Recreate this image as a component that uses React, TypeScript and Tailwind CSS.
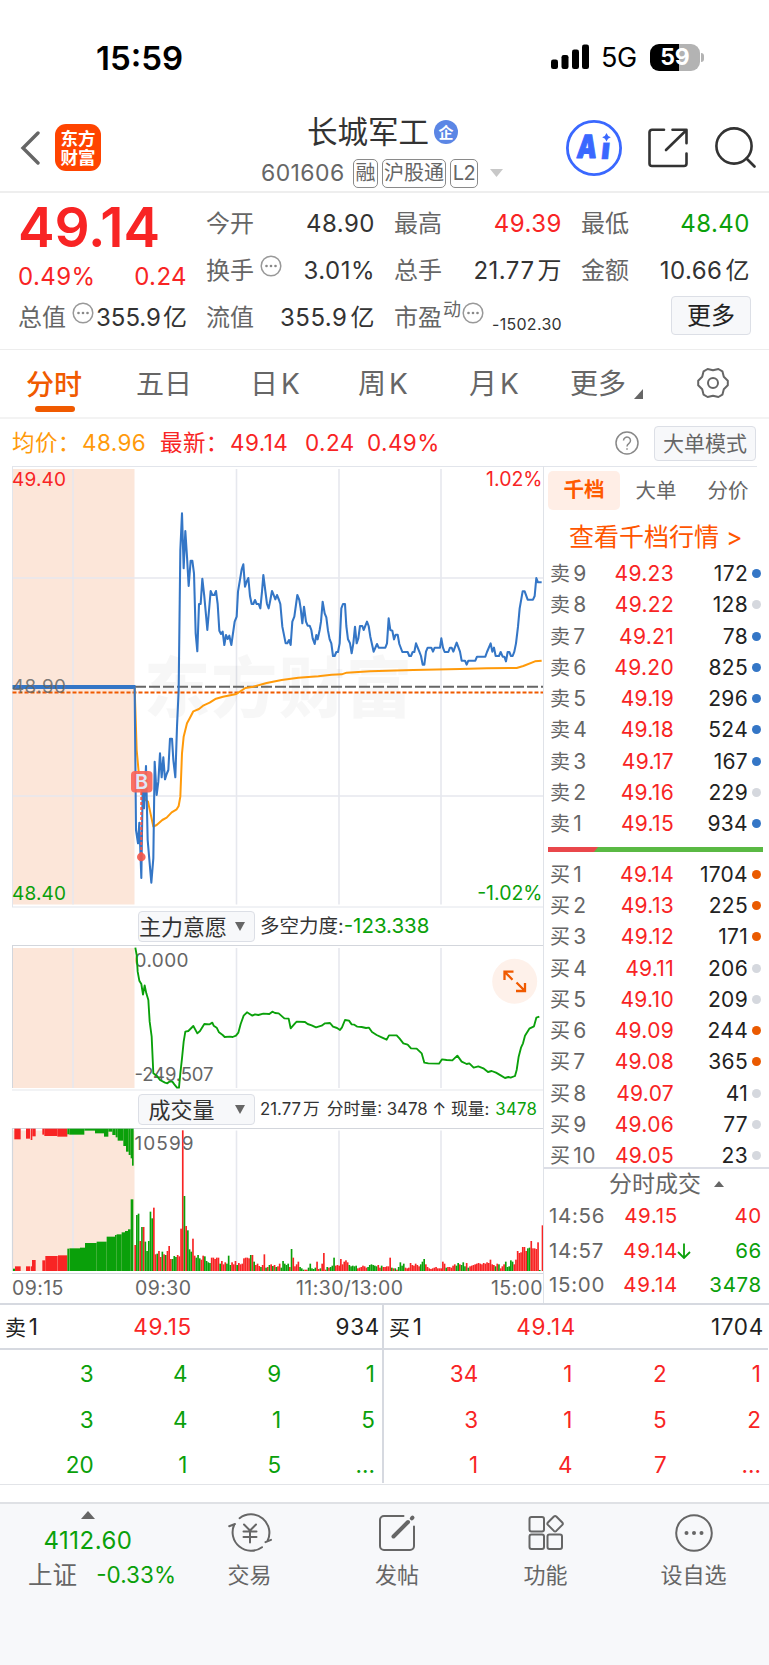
import clsx from 'clsx'
import type { ReactNode } from 'react'

const RED = '#f82424'
const GREEN = '#0aa00a'

// chart series are kept at 3x resolution and scaled down when drawn
const PRICE =
  '404,684 408,1110 414,1150 418,1088 424,1254 428,985 432,1045 438,918 443,1140 454,1268 460,1195 464,905 470,1005 475,965 480,880 485,952 490,892 495,958 500,942 505,930 510,836 516,836 520,900 526,952 531,800 536,690 541,270 546,160 551,325 556,213 561,290 566,378 572,302 577,302 582,340 587,520 592,574 597,432 602,432 607,356 613,410 622,510 632,393 637,405 643,405 648,393 653,432 658,512 663,522 668,515 673,555 678,525 683,537 688,527 694,555 704,485 710,470 714,395 719,365 725,328 730,313 735,380 740,365 745,354 750,408 755,432 760,432 765,420 770,432 776,432 781,445 786,395 790,345 796,393 801,432 806,445 811,420 816,393 821,405 826,418 831,405 837,420 841,432 847,500 857,550 862,550 867,540 872,555 877,485 883,470 892,405 898,420 902,445 907,490 912,440 918,485 923,497 929,497 934,510 938,535 944,552 949,525 953,538 959,510 963,485 968,425 974,460 979,472 984,512 989,538 994,550 999,588 1004,588 1009,576 1014,576 1019,550 1024,445 1029,432 1035,432 1039,498 1044,538 1050,550 1055,580 1060,550 1065,500 1070,550 1075,535 1080,498 1087,498 1091,510 1101,485 1106,498 1111,530 1121,575 1131,552 1136,563 1156,563 1161,550 1166,475 1171,510 1177,512 1182,538 1187,524 1193,524 1198,552 1207,576 1223,576 1228,588 1233,588 1238,576 1243,576 1248,550 1258,575 1263,588 1268,614 1273,614 1278,575 1283,563 1294,563 1299,575 1304,563 1320,563 1324,535 1329,563 1334,576 1345,576 1350,563 1355,563 1360,575 1370,548 1380,575 1385,602 1395,602 1400,614 1405,602 1426,602 1431,590 1456,590 1461,576 1472,550 1477,575 1482,563 1487,588 1497,588 1502,576 1508,590 1513,590 1518,604 1523,576 1528,576 1533,588 1538,588 1543,575 1548,550 1554,500 1559,445 1568,394 1574,394 1583,419 1599,419 1604,408 1609,354 1614,367 1625,367'

const AVERAGE =
  '404,684 410,870 420,980 436,1020 444,1025 460,1100 470,1095 487,1080 500,1073 515,1057 530,1048 536,1038 541,1010 546,880 551,830 561,790 570,773 580,754 597,747 611,736 629,728 648,716 669,710 709,702 736,684 760,680 800,669 845,660 895,653 955,649 995,644 1025,643 1040,638 1110,634 1240,630 1380,627 1460,625 1550,624 1570,618 1605,604 1625,602'

const FORCE =
  '406,143 410,165 413,215 418,242 424,252 429,284 434,256 439,280 445,300 449,365 455,410 460,520 470,527 480,540 495,548 502,550 508,545 517,545 523,553 531,563 537,563 541,520 546,475 551,425 556,395 565,393 580,378 592,400 600,393 613,372 629,373 637,368 641,377 650,383 657,397 668,405 674,411 690,410 698,411 708,407 715,398 722,372 731,347 741,337 749,342 757,347 765,343 775,345 790,341 808,342 817,335 825,339 836,340 853,355 866,356 872,385 885,370 890,365 915,366 923,372 935,376 948,382 965,377 975,370 990,369 999,380 1011,384 1020,390 1026,382 1035,360 1047,362 1055,373 1063,374 1072,380 1085,381 1098,384 1107,383 1116,396 1130,405 1145,412 1160,419 1167,406 1190,406 1199,416 1210,430 1223,434 1233,445 1250,446 1265,460 1273,488 1285,490 1317,491 1326,478 1340,480 1357,481 1372,467 1385,485 1400,492 1408,490 1421,503 1435,499 1450,505 1464,516 1475,513 1488,518 1502,526 1515,534 1525,531 1532,533 1545,528 1550,510 1556,470 1563,443 1569,430 1575,407 1588,386 1602,379 1609,353 1618,350'

// per-minute volume, positive = red, negative = green
const VOLUME = [
  78, -168, -172, 90, -132, 132, -88, -60, -90, -178, -158, 190, 50, -52, 60, 42, -58, 50, -48, 60, 75, 36, -36, -45, -42, 48, 44,
  127, 422, -225, 135, -122, -65, -58, 97, 46, -40, -48, -38, 34, 46, -44, -30, -26, -24, 40, 40, 36, 40, 40, -22, 30, 20, 26, -22,
  -46, -18, 26, 20, 30, -18, 24, 20, 22, 38, 40, 40, 38, -48, 48, -28, 18, 22, 15, -12, 18, 50, -10, 12, -18, 20, -15, 18, -12, 14, 22,
  -10, -30, -22, -18, -22, 12, -66, 40, 14, 20, 28, -12, -8, -4, 4, 4, -10, -22, -8, -6, -10, 28, 6, -8, 22, 54, 4, -12, 10, -12, -16,
  -40, 16, 18, 16, 36, 20, 28, 32, 26, -18, -14, -16, -14, -16, 8, 10, 12, 16, 14, 10, -12, -18, -20, -18, -16, -14, 18, 10, -16, 12,
  12, 14, 14, 40, -10, 8, -8, 4, -12, -26, -16, -22, 10, 8, 10, 24, 18, 16, 22, 18, 14, -20, -28, -36, 20, 12, 8, 6, 8, 10, 12, 8, 8,
  8, 28, 22, -10, 12, 12, 10, 16, 20, -16, -24, 20, -18, -26, -14, 24, -10, 14, 16, 18, 20, 22, 24, 22, 20, 24, 22, 26, 24, 34, 20,
  18, -14, 22, -20, 8, 14, 20, -28, -12, -14, -32, -28, 20, 34, 60, 54, 56, 72, 72, 60, -68, -70, 90, 68, 68, 66, 86, -3,
]

type Block = [number, number, number, number]

// call auction blocks: x1, x2, edge y, direction
const AUCTION_BOTTOM: Block[] = [
  [39, 45, 1106, -1], [45, 62, 1099, 1], [78, 90, 1099, 1], [92, 96, 1099, 1], [96, 107, 1080, 1], [127, 136, 1081, 1],
  [136, 173, 1068, 1], [174, 202, 1066, 1], [202, 207, 1046, -1], [208, 240, 1045, -1], [240, 255, 1043, -1], [255, 290, 1029, -1],
  [290, 320, 1025, -1], [320, 345, 1010, -1], [345, 350, 1005, -1], [350, 365, 1003, -1], [365, 375, 997, -1],
  [375, 384, 993, -1], [384, 392, 988, -1], [392, 400, 898, -1],
]
const AUCTION_TOP: Block[] = [
  [43, 62, 718, 1], [78, 90, 716, 1], [92, 97, 720, 1], [97, 107, 709, 1], [127, 133, 704, 1], [133, 172, 708, 1],
  [172, 202, 710, 1], [202, 208, 703, -1], [208, 253, 704, -1], [253, 285, 692, -1], [285, 312, 700, -1], [312, 325, 710, -1],
  [325, 337, 695, -1], [337, 347, 705, -1], [347, 353, 712, -1], [353, 370, 722, -1], [370, 378, 738, -1],
  [378, 386, 755, -1], [386, 392, 765, -1], [392, 396, 775, -1], [396, 401, 797, -1],
]

const SELLS = [
  ['9', '49.23', '172', 1], ['8', '49.22', '128', 0], ['7', '49.21', '78', 1], ['6', '49.20', '825', 1], ['5', '49.19', '296', 1],
  ['4', '49.18', '524', 1], ['3', '49.17', '167', 1], ['2', '49.16', '229', 0], ['1', '49.15', '934', 1],
] as const
const BUYS = [
  ['1', '49.14', '1704', 1], ['2', '49.13', '225', 1], ['3', '49.12', '171', 1], ['4', '49.11', '206', 0], ['5', '49.10', '209', 0],
  ['6', '49.09', '244', 1], ['7', '49.08', '365', 1], ['8', '49.07', '41', 0], ['9', '49.06', '77', 0], ['10', '49.05', '23', 0],
] as const

const SELL_QUEUE = ['3', '4', '9', '1', '3', '4', '1', '5', '20', '1', '5', '...']
const BUY_QUEUE = ['34', '1', '2', '1', '3', '1', '5', '2', '1', '4', '7', '...']

function MoreDots() {
  return (
    <svg width="22" height="22" viewBox="0 0 22 22" className="shrink-0">
      <circle cx="11" cy="11" r="9.8" fill="none" stroke="#999" strokeWidth="1.5" />
      <circle cx="6.5" cy="11" r="1.3" fill="#888" />
      <circle cx="11" cy="11" r="1.3" fill="#888" />
      <circle cx="15.5" cy="11" r="1.3" fill="#888" />
    </svg>
  )
}

function StatusBar() {
  return (
    <div className="flex h-[100px] items-start justify-between pl-[96px] pr-[65px]">
      <div className="mt-[38px] text-[33px] leading-[40px] font-semibold text-black">15:59</div>
      <div className="mt-[37px] flex h-10 items-center">
        <svg width="39" height="26" viewBox="0 0 39 26">
          <rect x="0" y="15.5" width="7" height="9.5" rx="2.2" />
          <rect x="10.5" y="11" width="7" height="14" rx="2.2" />
          <rect x="21" y="5.5" width="7" height="19.5" rx="2.2" />
          <rect x="31" y="0.5" width="7" height="24.5" rx="2.2" />
        </svg>
        <span className="ml-[11px] w-[49px] pt-px text-[27px] tracking-[-0.3px] text-black">5G</span>
        <div className="flex h-[27px] w-[50px] items-center justify-center rounded-[9px] bg-[linear-gradient(90deg,#000_0_58%,#b3b3b3_58%)] text-[23px] font-bold text-white">
          59
        </div>
        <div className="ml-[1px] h-[9px] w-[3px] rounded-r-full bg-[#b3b3b3]" />
      </div>
    </div>
  )
}

function Header() {
  return (
    <header className="flex h-[93px] items-start border-b-2 border-[#eeeeee] pl-[20px]">
      <svg width="20" height="36" viewBox="0 0 20 36" className="mt-[30px]">
        <path d="M18 3L3 18l15 15" fill="none" stroke="#666" strokeWidth="3.4" strokeLinecap="round" />
      </svg>
      <div className="mt-[24px] ml-[15px] flex h-[47px] w-[46px] flex-col items-center justify-center rounded-[11px] bg-[#ff4400] text-[17.5px] leading-[19px] font-bold text-white">
        <span>东方</span>
        <span>财富</span>
      </div>
      <div className="ml-[161px] w-[304px]">
        <div className="mt-[12px] flex h-[40px] items-center pl-[45px] text-[30.5px] text-[#333]">
          长城军工
          <span className="ml-[5px] flex h-6 w-6 items-center justify-center rounded-full bg-[#5b86e5] text-[15px] font-bold text-white">企</span>
        </div>
        <div className="mt-[6px] ml-[-1px] flex h-[30px] items-center gap-1 text-[20px] text-[#666]">
          <span className="w-[87px] text-[23px] tracking-[0.4px]">601606</span>
          <span className="ml-[1px] flex h-[29px] w-[25px] items-center justify-center rounded-[5px] border-[1.5px] border-[#8a8a8a]">融</span>
          <span className="flex h-[29px] w-[64px] items-center justify-center rounded-[5px] border-[1.5px] border-[#8a8a8a]">沪股通</span>
          <span className="flex h-[29px] w-[28px] items-center justify-center rounded-[5px] border-[1.5px] border-[#8a8a8a] tracking-[-0.5px]">L2</span>
          <svg width="13" height="8" viewBox="0 0 13 8" className="ml-[8px]">
            <path d="M0 0h13L6.5 8z" fill="#c8c8c8" />
          </svg>
        </div>
      </div>
      <svg width="56" height="56" viewBox="0 0 56 56" className="mt-[20px]" fill="#3a68ff">
        <circle cx="28" cy="28" r="26.6" fill="none" stroke="#3a68ff" strokeWidth="2.8" />
        <g transform="translate(4 0) skewX(-6)" fontWeight="900" stroke="#3a68ff" strokeLinejoin="round">
          <text x="10" y="38" fontSize="32" textLength="20" lengthAdjust="spacingAndGlyphs" strokeWidth="1">A</text>
          <text x="34.5" y="39.5" fontSize="30" textLength="9" lengthAdjust="spacingAndGlyphs" strokeWidth="0.5">ı</text>
        </g>
        <path d="M40.5 13q1 3.300 4.300 4.300-3.300 1-4.300 4.300-1-3.300-4.300-4.300 3.300-1 4.300-4.300z" />
      </svg>
      <svg width="40" height="40" viewBox="0 0 40 40" className="mt-[28px] ml-[26px]" fill="none" stroke="#333" strokeWidth="2.6" strokeLinecap="round" strokeLinejoin="round">
        <path d="M16 1.800H4a2.500 2.500 0 0 0-2.500 2.500V35.500A2.500 2.500 0 0 0 4 38h32a2.500 2.500 0 0 0 2.500-2.500V25.500M24.500 1.800h14v13.500M38 2.500L18 22" />
      </svg>
      <svg width="42" height="42" viewBox="0 0 42 42" className="mt-[26px] ml-[26px]" fill="none" stroke="#333" strokeWidth="2.6" strokeLinecap="round">
        <circle cx="20" cy="20" r="17.6" />
        <path d="M32.500 32.500l8 8" />
      </svg>
    </header>
  )
}

function Quote({ label, value, color = 'text-[#333]', icon }: { label: string; value: ReactNode; color?: string; icon?: ReactNode }) {
  return (
    <div className="flex h-[47px] items-center justify-between whitespace-nowrap">
      <div className="flex items-center text-[24px] leading-none text-[#666]">
        {label}
        {icon}
      </div>
      <div className={clsx('text-[24px] tracking-[0.5px]', color)}>{value}</div>
    </div>
  )
}

function Quotes() {
  return (
    <section className="grid h-[157px] grid-cols-[169px_169px_168px_169px] gap-[19px] border-b border-[#ededed] pt-[7px] pl-[18px]">
      <div>
        <div className="h-[59px] text-[55px] leading-[55px] font-semibold tracking-[-0.2px] text-[#f82424]">49.14</div>
        <div className="flex h-[35px] items-center justify-between pt-px text-[24px] tracking-[0.4px] text-[#f82424]">
          <span>0.49%</span>
          <span>0.24</span>
        </div>
        <Quote
          label="总值"
          icon={<span className="mt-[-10px] ml-[6px]"><MoreDots /></span>}
          value={<span className="ml-[-8px] tracking-normal">355.9<span className="ml-[2px]">亿</span></span>}
        />
      </div>
      <div>
        <Quote label="今开" value="48.90" />
        <Quote label="换手" icon={<span className="mt-[-10px] ml-[6px]"><MoreDots /></span>} value="3.01%" />
        <Quote label="流值" value={<>355.9<span className="ml-[3px]">亿</span></>} />
      </div>
      <div>
        <Quote label="最高" value="49.39" color="text-[#f82424]" />
        <Quote label="总手" value={<>21.77<span className="ml-[3px]">万</span></>} />
        <Quote
          label="市盈"
          icon={<span className="mt-[-10px] ml-[1px] flex items-center text-[18px]"><span className="mt-[-5px]">动</span><span className="ml-[1px]"><MoreDots /></span></span>}
          value={<span className="relative top-[4px] text-[16px] tracking-[0.3px]">-1502.30</span>}
        />
      </div>
      <div>
        <Quote label="最低" value="48.40" color="text-[#0aa00a]" />
        <Quote label="金额" value={<>10.66<span className="ml-[3px]">亿</span></>} />
        <button className="mt-[2px] ml-[90px] flex h-[39px] w-[80px] items-center justify-center rounded-[4px] border border-[#dcdfe6] bg-[#f7f8fa] text-[24px] text-[#222]">
          更多
        </button>
      </div>
    </section>
  )
}

function PeriodTabs() {
  return (
    <nav className="flex h-[69px] items-center border-b-2 border-[#f3f3f3] text-[28px] text-[#666]">
      <div className="mt-[2px] ml-[26px] flex h-[60px] w-[110px] flex-col font-medium text-[#f05a00]">
        <span className="mt-[9px] h-[42px] leading-[42px]">分时</span>
        <span className="ml-[9px] h-[6px] w-[40px] shrink-0 rounded-[3px] bg-[#f05a00]" />
      </div>
      <span className="w-[114px]">五日</span>
      <span className="w-[108px]">日<span className="ml-[3px]">K</span></span>
      <span className="w-[111px]">周<span className="ml-[3px]">K</span></span>
      <span className="w-[101px]">月<span className="ml-[3px]">K</span></span>
      <span className="w-[64px]">更多</span>
      <svg width="9" height="10" viewBox="0 0 9 10" className="mt-[20px]">
        <path d="M9 0v10H0z" fill="#666" />
      </svg>
      <svg width="34" height="32" viewBox="0 0 34 32" className="ml-[53px] mb-[1px]" fill="none" stroke="#666" strokeWidth="2" strokeLinejoin="round">
        <path d="M31.800 13.700V18.300L27.800 22.200 26.400 27.700 22.400 30 17 28.800 11.600 30 7.600 27.700 6.200 22.200 2.200 18.300V13.700L6.200 9.800 7.600 4.300 11.600 2 17 3.200 22.400 2 26.400 4.300 27.800 9.800z" />
        <circle cx="17" cy="16" r="5" />
      </svg>
    </nav>
  )
}

function PriceLine() {
  return (
    <div className="flex h-[47px] items-center pt-px pl-[12px] text-[22.5px] tracking-[0.4px] text-[#f82424]">
      <span className="w-[70px] text-[#ff9a0a]">均价：</span>
      <span className="w-[78px] text-[#ff9a0a]">48.96</span>
      <span className="w-[70px]">最新：</span>
      <span className="w-[75px]">49.14</span>
      <span className="w-[62px]">0.24</span>
      <span className="w-[248px]">0.49%</span>
      <svg width="24" height="24" viewBox="0 0 24 24" fill="none" stroke="#888" strokeWidth="1.5">
        <circle cx="12" cy="12" r="11" />
        <path d="M8.500 9.500a3.500 3.500 0 1 1 5.500 2.900c-1.300.9-2 1.500-2 3M12 17.200v1.600" />
      </svg>
      <button className="ml-[15px] flex h-[35px] w-[102px] items-center justify-center rounded-[4px] border border-[#dcdfe6] bg-[#f7f8fa] text-[21px] tracking-normal text-[#666]">
        大单模式
      </button>
    </div>
  )
}

function Grid({ top, bottom }: { top: number; bottom: number }) {
  return (
    <g>
      <rect x="12.5" y={top} width="122" height={bottom - top} fill="#fce6d9" />
      {[73, 236.5, 339, 441].map((x) => (
        <path key={x} d={`M${x} ${top}V${bottom}`} stroke="#e6e8ee" strokeWidth="1.6" />
      ))}
    </g>
  )
}

function PriceChart() {
  return (
    <svg width="544" height="442" viewBox="0 466 544 442" className="block">
      <Grid top={469} bottom={904.5} />
      <path d="M12.500 578H543M12.500 796H543" stroke="#e6e8ee" strokeWidth="1.6" />
      <path d="M12 466.500H544M12.500 466V907M12 907H544" stroke="#e2e5eb" fill="none" />
      <text x="144" y="712" fontSize="66" fontWeight="900" textLength="268" fill="#000" fillOpacity="0.03">东方财富</text>
      <path d="M135 686.800H543" stroke="#666" strokeWidth="2" strokeDasharray="11 3" />
      <path d="M12.500 692.500H543" stroke="#f05a00" strokeWidth="1.8" strokeDasharray="4 2" />
      <path d="M12.500 687H135.500" stroke="#3476c6" strokeWidth="3.8" />
      <text x="12" y="693" fontSize="19" textLength="54" fill="#666" fillOpacity="0.85">48.90</text>
      <g transform="translate(0 460) scale(0.33333)" fill="none" strokeLinejoin="round">
        <polyline points={AVERAGE} stroke="#ff9a0a" strokeWidth="6" />
        <polyline points={PRICE} stroke="#3476c6" strokeWidth="6.2" />
      </g>
      <path d="M141.300 792V857" stroke="#f4574a" strokeWidth="2" strokeDasharray="3 2" />
      <circle cx="141.3" cy="857" r="4.3" fill="#f4574a" fillOpacity="0.9" />
      <rect x="131" y="771" width="21.5" height="21.5" rx="4" fill="#fb6557" fillOpacity="0.92" />
      <text x="141.7" y="788.7" fontSize="20" fontWeight="600" textAnchor="middle" fill="#dfe8f7">B</text>
      <g fontSize="19">
        <text x="12" y="486" textLength="54" fill={RED}>49.40</text>
        <text x="542.5" y="486" fontSize="19.5" textAnchor="end" fill={RED}>1.02%</text>
        <text x="12" y="899.500" textLength="54" fill={GREEN}>48.40</text>
        <text x="542.5" y="899.5" fontSize="19.5" textAnchor="end" fill={GREEN}>-1.02%</text>
      </g>
    </svg>
  )
}

function IndicatorBar({ name, nameWidth, children }: { name: string; nameWidth: string; children: ReactNode }) {
  return (
    <div className="flex h-[37px] items-center whitespace-nowrap">
      <button className="ml-[138px] flex h-[31px] w-[117px] items-center justify-between rounded-[4px] border border-[#dcdfe6] bg-[#f7f8fa] pr-[9px] text-[22px] text-[#333]">
        <span className={clsx('text-center', nameWidth)}>{name}</span>
        <svg width="10" height="9" viewBox="0 0 10 9">
          <path d="M0 0h10L5 9z" fill="#666" />
        </svg>
      </button>
      {children}
    </div>
  )
}

function ForceChart() {
  return (
    <svg width="544" height="146" viewBox="0 945 544 146" className="block">
      <path d="M12 945.500H544" stroke="#d3d6dc" strokeWidth="1.2" />
      <path d="M12 1090H544" stroke="#e6e8ec" strokeWidth="1.2" />
      <Grid top={948} bottom={1088} />
      <path d="M12.500 945V1088" stroke="#d3d6dc" />
      <text x="134.5" y="966.5" fontSize="19" textLength="54" fill="#666">0.000</text>
      <text x="134.5" y="1080.5" fontSize="18.5" textLength="79" fill="#666">-249.507</text>
      <g transform="translate(0 900) scale(0.33333)">
        <polyline points={FORCE} fill="none" stroke={GREEN} strokeWidth="5.600" strokeLinejoin="round" />
      </g>
      <circle cx="514.7" cy="981.3" r="22.5" fill="#fef1ea" />
      <path d="M504.500 980v-8.300h9M504.500 971.700l8 8M525 983v8h-9M525 991l-8.500-8.500" fill="none" stroke="#f05a00" strokeWidth="2.3" />
    </svg>
  )
}

function VolumeChart() {
  return (
    <svg width="544" height="146" viewBox="0 1128 544 146" className="block">
      <Grid top={1130.5} bottom={1271} />
      <path d="M12 1128.500H544M12.500 1128V1271M12 1273.500H544" stroke="#d3d6dc" strokeWidth="1.2" fill="none" />
      <g transform="translate(0 900) scale(0.33333)">
        {AUCTION_TOP.map(([x1, x2, y, dir]) => (
          <rect key={x1} x={x1} y={686} width={x2 - x1} height={y - 686} fill={dir > 0 ? RED : GREEN} />
        ))}
        {AUCTION_BOTTOM.map(([x1, x2, y, dir]) => (
          <rect key={x1} x={x1} y={y} width={x2 - x1} height={1113 - y} fill={dir > 0 ? RED : GREEN} />
        ))}
        {VOLUME.map((v, i) => (
          <rect key={i} x={403 + i * 5.1} y={1113 - Math.abs(v)} width={5} height={Math.abs(v)} fill={v > 0 ? RED : GREEN} />
        ))}
        <rect x="1625" y="976" width="5" height="137" fill={RED} />
      </g>
      <text x="134.5" y="1149.5" fontSize="19" textLength="59" fill="#666">10599</text>
    </svg>
  )
}

function Level({ side, row, dot }: { side: string; row: readonly [string, string, string, number]; dot: string }) {
  const [n, price, vol, on] = row
  return (
    <div className="flex h-[31.25px] items-center text-[21px] tracking-[0.3px]">
      <span className="w-[46px] whitespace-nowrap text-[#666]"><span className="mr-[3px] text-[20px]">{side}</span>{n}</span>
      <span className="w-[78px] text-right text-[#f82424]">{price}</span>
      <span className="w-[74px] text-right text-[#222]">{vol}</span>
      <span className={clsx('ml-[4px] h-[9px] w-[9px] rounded-full', on ? dot : 'bg-[#d5d8de]')} />
    </div>
  )
}

function OrderBook() {
  return (
    <aside className="h-[837px] w-[226px] border-l border-[#dfe2e8]">
      <div className="mr-[12px] h-[5px] border-t border-[#e2e5eb]" />
      <div className="flex h-[39px] items-center pl-[4px] text-[20.5px] text-[#666]">
        <span className="flex h-[39px] w-[72px] items-center justify-center rounded-[5px] bg-[#ffeee6] font-bold text-[#ff5a00]">千档</span>
        <span className="w-[72px] pt-px text-center">大单</span>
        <span className="w-[72px] pt-px text-center">分价</span>
      </div>
      <div className="mt-[6px] h-[42px] pl-[25px] text-[25px] leading-[42px] whitespace-nowrap text-[#ff5500]">查看千档行情 &gt;</div>
      <div className="pl-[6px]">
        {SELLS.map((r) => <Level key={r[0]} side="卖" row={r} dot="bg-[#3476c6]" />)}
      </div>
      <svg width="215" height="5" viewBox="0 0 215 5" className="mt-[8px] ml-[4px] block">
        <path d="M0 0h215v5H0z" fill="#5ab944" />
        <path d="M0 0h50l-4 5H0z" fill="#e9474b" />
      </svg>
      <div className="mt-[6.5px] h-[310.5px] overflow-hidden border-b-2 border-[#dcdee6] pl-[6px]">
        {BUYS.map((r) => <Level key={r[0]} side="买" row={r} dot="bg-[#ea5a00]" />)}
      </div>
      <div className="flex h-[30px] items-center pl-[65px] text-[23px] text-[#666]">
        分时成交
        <svg width="10" height="6" viewBox="0 0 10 6" className="ml-[13px]">
          <path d="M5 0l5 6H0z" fill="#666" />
        </svg>
      </div>
      {[
        ['14:56', '49.15', '40', false],
        ['14:57', '49.14', '66', true],
        ['15:00', '49.14', '3478', true],
      ].map(([time, price, vol, down], i) => (
        <div key={String(time)} className="flex h-[34.5px] items-center pl-[5px] text-[20.5px] tracking-[0.7px]">
          <span className="w-[60px] text-[#666]">{time}</span>
          <span className="w-[69px] text-right text-[#f82424]">{price}</span>
          <span className="flex w-[13px] justify-end">
            {i === 1 && (
              <svg width="14" height="16" viewBox="0 0 14 16" className="shrink-0" fill="none" stroke={GREEN} strokeWidth="1.8">
                <path d="M7 0.500V15M1 9l6 6 6-6" />
              </svg>
            )}
          </span>
          <span className={clsx('w-[71px] text-right', down ? 'text-[#0aa00a]' : 'text-[#f82424]')}>{vol}</span>
        </div>
      ))}
    </aside>
  )
}

function Queue({ name, price, vol, cells, color, width }: { name: string; price: string; vol: string; cells: string[]; color: string; width: string }) {
  return (
    <div className={clsx('shrink-0', width)}>
      <div className="flex h-[45px] items-center border-b-2 border-[#d6d9e0] pt-px pl-[5px] text-[22.5px] tracking-[0.7px] text-[#222]">
        <span className="w-[46px]"><span className="mr-[2px] text-[21px]">{name}</span>1</span>
        <span className="w-[141px] text-right text-[#f82424]">{price}</span>
        <span className="w-[188px] text-right">{vol}</span>
      </div>
      <div className={clsx('grid grid-cols-4 pt-px pr-[7px] text-right text-[22.5px] leading-[45.5px]', color)}>
        {cells.map((c, i) => <span key={i}>{c}</span>)}
      </div>
    </div>
  )
}

function NavItem({ label, width, children }: { label: string; width: string; children: ReactNode }) {
  return (
    <div className={clsx('flex flex-col items-center pt-[9px] text-[22px] leading-[36px] text-[#666]', width)}>
      <svg width="44" height="40" viewBox="0 0 44 40" fill="none" stroke="#666" strokeWidth="2" strokeLinecap="round" strokeLinejoin="round">
        {children}
      </svg>
      <span className="mt-[4px]">{label}</span>
    </div>
  )
}

function BottomBar() {
  return (
    <footer className="flex h-[163px] border-t-2 border-[#dfe1e5] bg-[#f7f8fa]">
      <div className="flex w-[176px] flex-col items-center text-[#0aa00a]">
        <svg width="14" height="8" viewBox="0 0 14 8" className="mt-[7px]">
          <path d="M7 0l7 8H0z" fill="#666" />
        </svg>
        <span className="mt-[4px] text-[24px] leading-[36px] tracking-[0.5px]">4112.60</span>
        <div className="mt-[-2px] ml-[28px] flex h-[36px] w-[148px] items-center justify-between whitespace-nowrap">
          <span className="text-[24.5px] text-[#666]">上证</span>
          <span className="text-[22.5px]">-0.33%</span>
        </div>
      </div>
      <NavItem label="交易" width="w-[147px]">
        <path d="M11.600 5.200A18.500 18.500 0 0 1 39.400 28.200M37.500 29.200l5.500-2.400M34 34.200A18.500 18.500 0 0 1 6.300 11.500M1.200 13.200l5.800-2.200" />
        <path d="M16 11.500l6 6 6-6M22 17.500v12M15.500 18.500h13M15.500 24h13" />
      </NavItem>
      <NavItem label="发帖" width="w-[148px]">
        <path d="M28.500 3H9a4 4 0 0 0-4 4v26a4 4 0 0 0 4 4h26a4 4 0 0 0 4-4V13.500" />
        <path d="M18.500 23.500L33 9" strokeWidth="4" />
        <path d="M36.800 5.300l.7-.7" strokeWidth="4" />
      </NavItem>
      <NavItem label="功能" width="w-[149px]">
        <rect x="5.5" y="4" width="14.5" height="14.5" rx="2" />
        <rect x="5.5" y="21.5" width="14.5" height="14.5" rx="2" />
        <rect x="23.5" y="21.5" width="14.5" height="14.5" rx="2" />
        <path d="M29.900 3.500a1.800 1.800 0 0 1 2.400 0l6 6a1.800 1.800 0 0 1 0 2.400l-6 6a1.800 1.800 0 0 1-2.400 0l-6-6a1.800 1.800 0 0 1 0-2.400z" />
      </NavItem>
      <NavItem label="设自选" width="w-[147px]">
        <circle cx="22" cy="20" r="17.8" />
        <g fill="#666" stroke="none">
          <circle cx="14.5" cy="20" r="2" />
          <circle cx="22" cy="20" r="2" />
          <circle cx="29.5" cy="20" r="2" />
        </g>
      </NavItem>
    </footer>
  )
}

export default function App() {
  return (
    <div className="h-[1665px] w-[769px] overflow-hidden bg-white font-['Inter','Noto_Sans_CJK_SC',sans-serif] leading-none">
      <StatusBar />
      <Header />
      <Quotes />
      <PeriodTabs />
      <PriceLine />
      <div className="flex h-[837px]">
        <div className="w-[543px] shrink-0">
          <PriceChart />
          <IndicatorBar name="主力意愿" nameWidth="w-[88px]">
            <span className="ml-[5px] text-[19.5px] text-[#333]">多空力度:</span>
            <span className="text-[20.5px] text-[#0aa00a]">-123.338</span>
          </IndicatorBar>
          <ForceChart />
          <IndicatorBar name="成交量" nameWidth="w-[85px]">
            <span className="ml-[5px] text-[16.8px] text-[#333]">21.77<span className="mr-[7px] ml-[2px]">万</span>分时量: 3478 ↑ 现量:</span>
            <span className="ml-[6px] text-[16.8px] tracking-[0.2px] text-[#0aa00a]">3478</span>
          </IndicatorBar>
          <VolumeChart />
          <div className="flex h-[29px] items-center pt-px pl-[12px] text-[19.5px] tracking-[0.4px] text-[#666]">
            <span className="w-[123px]">09:15</span>
            <span className="w-[161px]">09:30</span>
            <span className="w-[150px]">11:30/13:00</span>
            <span className="w-[97px] text-right">15:00</span>
          </div>
        </div>
        <OrderBook />
      </div>
      <section className="flex h-[182px] border-t-2 border-b border-t-[#d6d9e0] border-b-[#e2e4e8]">
        <Queue name="卖" price="49.15" vol="934" cells={SELL_QUEUE} color="text-[#0aa00a]" width="w-[382px]" />
        <div className="h-[178px] w-[2px] shrink-0 bg-[#d6d9e0]" />
        <Queue name="买" price="49.14" vol="1704" cells={BUY_QUEUE} color="text-[#f82424]" width="w-[384px]" />
      </section>
      <div className="h-[17px]" />
      <BottomBar />
    </div>
  )
}
